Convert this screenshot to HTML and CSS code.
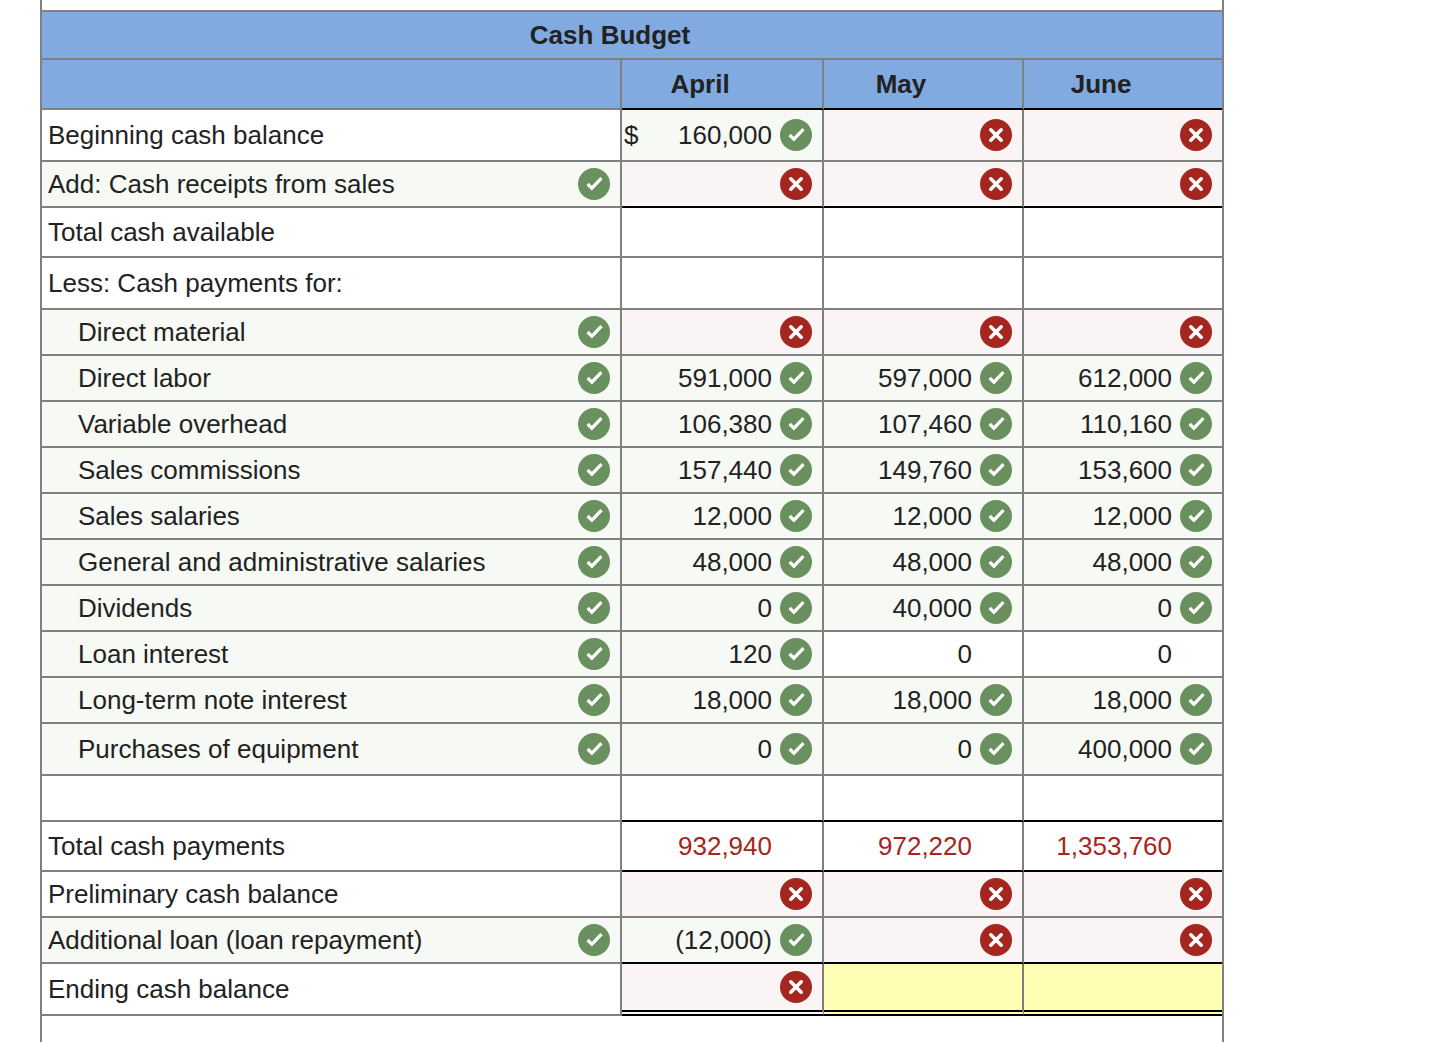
FILE: index.html
```html
<!DOCTYPE html>
<html lang="en">
<head>
<meta charset="utf-8">
<title>Cash Budget</title>
<link rel="stylesheet" href="styles.css">
</head>
<body>
<svg class="defs" aria-hidden="true">
  <symbol id="ok" viewBox="0 0 32 32"><circle cx="16" cy="16" r="16" fill="#6a905f"/><path d="M9.6 16l4.3 4.2 9.6-10" fill="none" stroke="#fff" stroke-width="3.2"/></symbol>
  <symbol id="no" viewBox="0 0 32 32"><circle cx="16" cy="16" r="16" fill="#a4261e"/><path d="M10.8 10.8l10.4 10.4M21.2 10.8L10.8 21.2" fill="none" stroke="#fff" stroke-width="3.6" stroke-linecap="round"/></symbol>
</svg>
<main class="frame">
<table class="budget">
  <colgroup><col class="c-label"><col class="c-apr"><col class="c-may"><col class="c-jun"></colgroup>
  <tbody>
    <tr class="h48 head"><th class="title" colspan="4">Cash Budget</th></tr>
    <tr class="h50 head"><th></th><th class="k month">April</th><th class="k month">May</th><th class="k month">June</th></tr>

    <tr class="h52">
      <td><div class="lab">Beginning cash balance</div></td>
      <td class="good"><div class="val"><span class="cur">$</span><span>160,000</span><svg class="ic"><use href="#ok"/></svg></div></td>
      <td class="bad"><div class="val"><svg class="ic"><use href="#no"/></svg></div></td>
      <td class="bad"><div class="val"><svg class="ic"><use href="#no"/></svg></div></td>
    </tr>
    <tr class="h46">
      <td class="good"><div class="lab"><span>Add: Cash receipts from sales</span><svg class="ic"><use href="#ok"/></svg></div></td>
      <td class="bad k"><div class="val"><svg class="ic"><use href="#no"/></svg></div></td>
      <td class="bad k"><div class="val"><svg class="ic"><use href="#no"/></svg></div></td>
      <td class="bad k"><div class="val"><svg class="ic"><use href="#no"/></svg></div></td>
    </tr>
    <tr class="h50"><td><div class="lab">Total cash available</div></td><td></td><td></td><td></td></tr>
    <tr class="h52"><td><div class="lab">Less: Cash payments for:</div></td><td></td><td></td><td></td></tr>
    <tr class="h46">
      <td class="good"><div class="lab sub"><span>Direct material</span><svg class="ic"><use href="#ok"/></svg></div></td>
      <td class="bad"><div class="val"><svg class="ic"><use href="#no"/></svg></div></td>
      <td class="bad"><div class="val"><svg class="ic"><use href="#no"/></svg></div></td>
      <td class="bad"><div class="val"><svg class="ic"><use href="#no"/></svg></div></td>
    </tr>
    <tr class="h46">
      <td class="good"><div class="lab sub"><span>Direct labor</span><svg class="ic"><use href="#ok"/></svg></div></td>
      <td class="good"><div class="val"><span>591,000</span><svg class="ic"><use href="#ok"/></svg></div></td>
      <td class="good"><div class="val"><span>597,000</span><svg class="ic"><use href="#ok"/></svg></div></td>
      <td class="good"><div class="val"><span>612,000</span><svg class="ic"><use href="#ok"/></svg></div></td>
    </tr>
    <tr class="h46">
      <td class="good"><div class="lab sub"><span>Variable overhead</span><svg class="ic"><use href="#ok"/></svg></div></td>
      <td class="good"><div class="val"><span>106,380</span><svg class="ic"><use href="#ok"/></svg></div></td>
      <td class="good"><div class="val"><span>107,460</span><svg class="ic"><use href="#ok"/></svg></div></td>
      <td class="good"><div class="val"><span>110,160</span><svg class="ic"><use href="#ok"/></svg></div></td>
    </tr>
    <tr class="h46">
      <td class="good"><div class="lab sub"><span>Sales commissions</span><svg class="ic"><use href="#ok"/></svg></div></td>
      <td class="good"><div class="val"><span>157,440</span><svg class="ic"><use href="#ok"/></svg></div></td>
      <td class="good"><div class="val"><span>149,760</span><svg class="ic"><use href="#ok"/></svg></div></td>
      <td class="good"><div class="val"><span>153,600</span><svg class="ic"><use href="#ok"/></svg></div></td>
    </tr>
    <tr class="h46">
      <td class="good"><div class="lab sub"><span>Sales salaries</span><svg class="ic"><use href="#ok"/></svg></div></td>
      <td class="good"><div class="val"><span>12,000</span><svg class="ic"><use href="#ok"/></svg></div></td>
      <td class="good"><div class="val"><span>12,000</span><svg class="ic"><use href="#ok"/></svg></div></td>
      <td class="good"><div class="val"><span>12,000</span><svg class="ic"><use href="#ok"/></svg></div></td>
    </tr>
    <tr class="h46">
      <td class="good"><div class="lab sub"><span>General and administrative salaries</span><svg class="ic"><use href="#ok"/></svg></div></td>
      <td class="good"><div class="val"><span>48,000</span><svg class="ic"><use href="#ok"/></svg></div></td>
      <td class="good"><div class="val"><span>48,000</span><svg class="ic"><use href="#ok"/></svg></div></td>
      <td class="good"><div class="val"><span>48,000</span><svg class="ic"><use href="#ok"/></svg></div></td>
    </tr>
    <tr class="h46">
      <td class="good"><div class="lab sub"><span>Dividends</span><svg class="ic"><use href="#ok"/></svg></div></td>
      <td class="good"><div class="val"><span>0</span><svg class="ic"><use href="#ok"/></svg></div></td>
      <td class="good"><div class="val"><span>40,000</span><svg class="ic"><use href="#ok"/></svg></div></td>
      <td class="good"><div class="val"><span>0</span><svg class="ic"><use href="#ok"/></svg></div></td>
    </tr>
    <tr class="h46">
      <td class="good"><div class="lab sub"><span>Loan interest</span><svg class="ic"><use href="#ok"/></svg></div></td>
      <td class="good"><div class="val"><span>120</span><svg class="ic"><use href="#ok"/></svg></div></td>
      <td><div class="val"><span>0</span><span class="slot"></span></div></td>
      <td><div class="val"><span>0</span><span class="slot"></span></div></td>
    </tr>
    <tr class="h46">
      <td class="good"><div class="lab sub"><span>Long-term note interest</span><svg class="ic"><use href="#ok"/></svg></div></td>
      <td class="good"><div class="val"><span>18,000</span><svg class="ic"><use href="#ok"/></svg></div></td>
      <td class="good"><div class="val"><span>18,000</span><svg class="ic"><use href="#ok"/></svg></div></td>
      <td class="good"><div class="val"><span>18,000</span><svg class="ic"><use href="#ok"/></svg></div></td>
    </tr>
    <tr class="h52">
      <td class="good"><div class="lab sub"><span>Purchases of equipment</span><svg class="ic"><use href="#ok"/></svg></div></td>
      <td class="good"><div class="val"><span>0</span><svg class="ic"><use href="#ok"/></svg></div></td>
      <td class="good"><div class="val"><span>0</span><svg class="ic"><use href="#ok"/></svg></div></td>
      <td class="good"><div class="val"><span>400,000</span><svg class="ic"><use href="#ok"/></svg></div></td>
    </tr>
    <tr class="h46"><td></td><td class="k"></td><td class="k"></td><td class="k"></td></tr>
    <tr class="h50">
      <td><div class="lab">Total cash payments</div></td>
      <td class="k"><div class="val wrong"><span>932,940</span><span class="slot"></span></div></td>
      <td class="k"><div class="val wrong"><span>972,220</span><span class="slot"></span></div></td>
      <td class="k"><div class="val wrong"><span>1,353,760</span><span class="slot"></span></div></td>
    </tr>
    <tr class="h46">
      <td><div class="lab">Preliminary cash balance</div></td>
      <td class="bad"><div class="val"><svg class="ic"><use href="#no"/></svg></div></td>
      <td class="bad"><div class="val"><svg class="ic"><use href="#no"/></svg></div></td>
      <td class="bad"><div class="val"><svg class="ic"><use href="#no"/></svg></div></td>
    </tr>
    <tr class="h46">
      <td class="good"><div class="lab"><span>Additional loan (loan repayment)</span><svg class="ic"><use href="#ok"/></svg></div></td>
      <td class="good k"><div class="val"><span>(12,000)</span><svg class="ic"><use href="#ok"/></svg></div></td>
      <td class="bad k"><div class="val"><svg class="ic"><use href="#no"/></svg></div></td>
      <td class="bad k"><div class="val"><svg class="ic"><use href="#no"/></svg></div></td>
    </tr>
    <tr class="h52">
      <td><div class="lab">Ending cash balance</div></td>
      <td class="bad dbl"><div class="val"><svg class="ic"><use href="#no"/></svg></div></td>
      <td class="todo dbl"></td>
      <td class="todo dbl"></td>
    </tr>
  </tbody>
</table>
</main>
</body>
</html>
```

FILE: styles.css
```css
* { box-sizing: border-box; }

html, body {
  margin: 0;
  background: #fff;
}

.defs {
  position: absolute;
  width: 0;
  height: 0;
}

.frame {
  width: 1184px;
  height: 1042px;
  margin-left: 40px;
  padding-top: 10px;
  overflow: hidden;
  border-left: 2px solid #808080;
  border-right: 2px solid #808080;
}

.budget {
  width: 1180px;
  table-layout: fixed;
  border-collapse: separate;
  border-spacing: 0;
  border-top: 2px solid #808080;
  font-family: "Liberation Sans", Arial, sans-serif;
  font-size: 26px;
  color: #222;
}

.c-label { width: 580px; }
.c-apr { width: 202px; }
.c-may { width: 200px; }
.c-jun { width: 198px; }

.h46 { height: 46px; }
.h48 { height: 48px; }
.h50 { height: 50px; }
.h52 { height: 52px; }

td, th {
  padding: 0;
  vertical-align: middle;
  border-bottom: 2px solid #808080;
  border-right: 2px solid #808080;
}

tr > :last-child { border-right: 0; }

th {
  background: #81aae1;
  font-weight: 700;
  text-align: center;
}

.title { padding-right: 44px; }
.month { padding-right: 44px; }

.k { border-bottom-color: #000; }

.dbl {
  border-bottom: 6px double #000;
}

.good { background: #f7f9f5; }
.bad { background: #faf4f5; }
.todo { background: #ffffb3; }

.lab, .val {
  display: flex;
  align-items: center;
  padding-right: 10px;
}

.lab {
  justify-content: space-between;
  padding-left: 6px;
}

.sub { padding-left: 36px; }

.val {
  justify-content: flex-end;
  gap: 8px;
  padding-left: 2px;
}

.cur { margin-right: auto; }

.wrong { color: #a4261e; }

.ic, .slot {
  flex: none;
  display: block;
  width: 32px;
  height: 32px;
}
```
